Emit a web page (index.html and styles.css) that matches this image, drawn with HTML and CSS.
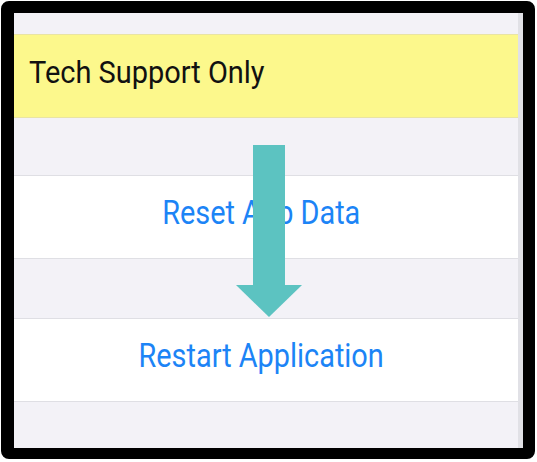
FILE: index.html
```html
<!DOCTYPE html>
<html lang="en">
<head>
  <meta charset="UTF-8" />
  <meta name="viewport" content="width=device-width, initial-scale=1.0" />
  <title>Settings</title>
  <link rel="stylesheet" href="styles.css">
</head>
<body>
  <div class="frame">
    <div class="screen">
      <div class="gap gap-top"></div>
      <div class="row row-note"><span class="label">Tech Support Only</span></div>
      <div class="gap gap-mid"></div>
      <div class="row row-action"><span class="label">Reset App Data</span></div>
      <div class="gap gap-mid2"></div>
      <div class="row row-action"><span class="label">Restart Application</span></div>
      <div class="gap gap-bottom"></div>

      <svg class="arrow" width="66" height="172" viewBox="0 0 66 172">
        <rect x="17" y="0" width="32" height="141" fill="#5cc3c1" />
        <polygon points="0,140 66,140 33,172" fill="#5cc3c1" />
      </svg>
    </div>
  </div>
</body>
</html>
```

FILE: styles.css
```css
body {
  margin: 0;
  background-color: #fff;
  font-family: Roboto, "Liberation Sans", Arial, sans-serif;
}
.frame {
  margin: 1px 0 0 1px;
  width: 509px;
  height: 435px;
  border-style: solid;
  border-color: #000;
  border-width: 12px 12px 11px 13px;
  border-radius: 8px;
}
.screen {
  position: relative;
  height: 100%;
  display: flex;
  flex-direction: column;
  background-color: #f3f2f7;
  border-right: 5px solid #e1e1e6;
  box-sizing: border-box;
}
.gap-top {
  height: 21px;
}
.gap-mid {
  height: 57px;
}
.gap-mid2 {
  height: 59px;
}
.gap-bottom {
  flex: 1;
}
.row {
  line-height: 32px;
}
/* the screenshot is squeezed sideways, so the text is narrower than the font */
.label {
  display: inline-block;
  white-space: nowrap;
}
.row-note {
  background-color: #fcf88c;
  border-top: 1px solid #e9e4a4;
  border-bottom: 1px solid #e9e4a4;
  padding: 21px 15px 29px;
  font-size: 32px;
  color: #111;
}
.row-note .label {
  transform: scaleX(0.905);
  transform-origin: left center;
}
.row-action {
  background-color: #fff;
  border-top: 1px solid #dfdfe4;
  border-bottom: 1px solid #dfdfe4;
  padding: 20px 10px 29px 0;
  font-size: 33px;
  line-height: 33px;
  height: 33px;
  text-align: center;
  color: #1c84f6;
}
.row-action .label {
  transform: scaleX(0.875);
}
.arrow {
  position: absolute;
  left: 222px;
  top: 132px;
}
```
